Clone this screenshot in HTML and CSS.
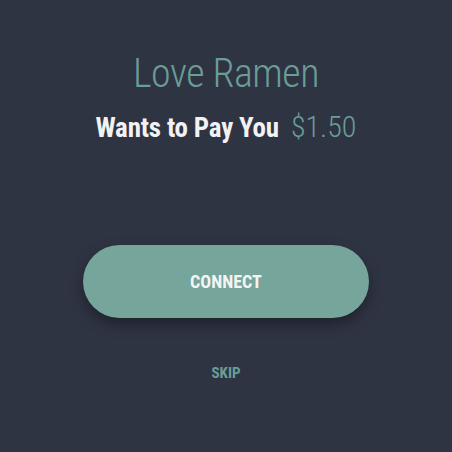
FILE: index.html
```html
<!DOCTYPE html>
<html lang="en">
  <head>
    <meta charset="UTF-8" />
    <meta name="viewport" content="width=device-width, initial-scale=1.0" />
    <title>Connect</title>
    <link rel="stylesheet" href="styles.css">
  </head>
  <body>
    <div class="screen">
      <h1 class="merchant">Love Ramen</h1>
      <div class="request">
        <span class="request-text">Wants to Pay You</span>
        <span class="amount">$1.50</span>
      </div>
      <button class="connect-button">CONNECT</button>
      <a class="skip" href="#">SKIP</a>
    </div>
  </body>
</html>
```

FILE: styles.css
```css
/* Payment connect screen */
body {
  margin: 0;
  background-color: #2f3443;
  font-family: "Roboto", sans-serif;
}
.screen {
  height: 452px;
  display: flex;
  flex-direction: column;
  align-items: center;
  padding-top: 49px;
  box-sizing: border-box;
}
.merchant {
  margin: 0;
  font-weight: 300;
  font-stretch: 75%;
  font-size: 40px;
  line-height: 50px;
  letter-spacing: -0.5px;
  color: #6a9d98;
}
.request {
  display: flex;
  align-items: baseline;
  gap: 12px;
  margin-top: 12px;
}
.request-text {
  color: #f2f2f2;
  font-weight: bold;
  font-stretch: 75%;
  font-size: 27px;
  line-height: 32px;
  letter-spacing: -0.2px;
}
.amount {
  font-weight: 300;
  font-stretch: 85%;
  color: #6a9d98;
  font-size: 30px;
  line-height: 32px;
}
.connect-button {
  margin-top: 101px;
  width: 286px;
  height: 73px;
  border: none;
  border-radius: 37px;
  background-color: #75a59b;
  color: #f4f4f4;
  font-family: "Roboto", sans-serif;
  font-stretch: 75%;
  font-weight: bold;
  font-size: 18px;
  box-shadow: 0 6px 14px rgba(0, 0, 0, 0.35);
  cursor: pointer;
}
.skip {
  margin-top: 46px;
  color: #6a9d98;
  font-weight: bold;
  font-stretch: 75%;
  font-size: 15px;
  line-height: 18px;
  text-decoration: none;
}
```
